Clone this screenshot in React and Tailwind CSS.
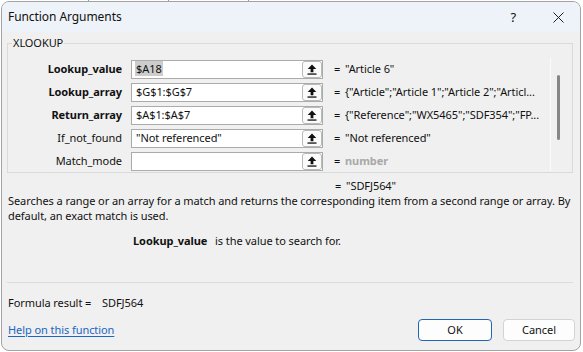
const rows = [
  { label: 'Lookup_value', bold: true, value: '$A18', selected: true, result: '"Article 6"' },
  { label: 'Lookup_array', bold: true, value: '$G$1:$G$7', result: '{"Article";"Article 1";"Article 2";"Articl...' },
  { label: 'Return_array', bold: true, value: '$A$1:$A$7', result: '{"Reference";"WX5465";"SDF354";"FP...' },
  { label: 'If_not_found', value: '"Not referenced"', result: '"Not referenced"' },
  { label: 'Match_mode', value: '', result: 'number', muted: true },
];

function RefIcon() {
  return (
    <svg width="10" height="11" viewBox="0 0 10 11">
      <path d="M5 0.5 L9.3 5 H6.4 V8.3 H3.6 V5 H0.7 Z" fill="#111" />
      <rect x="0.5" y="9.4" width="9" height="1.3" fill="#111" />
    </svg>
  );
}

export default function App() {
  return (
    <div className="relative w-[583px] h-[352px] bg-white overflow-hidden font-['Noto_Sans',sans-serif] text-[11px] tracking-[-0.07px] text-[#111]">
      {/* spreadsheet grid lines behind the dialog */}
      <div className="absolute left-[88px] top-0 w-px h-[2px] bg-[#9a9a9a]" />
      <div className="absolute left-[168px] top-0 w-px h-[2px] bg-[#9a9a9a]" />
      <div className="absolute left-[248px] top-0 w-px h-[2px] bg-[#9a9a9a]" />

      <div className="relative ml-[1px] mt-[1px] w-[580px] h-[350px] rounded-[8px] border border-[#a3a3a3] overflow-hidden bg-[#f0f0f0] flex flex-col">
        {/* title bar */}
        <div className="h-[30px] bg-[#eef3f9] flex items-center pl-[6px] pr-[14px] shrink-0">
          <span className="text-[12px] leading-none">Function Arguments</span>
          <span className="ml-auto text-[13px] leading-none mr-[37px]">?</span>
          <svg width="11" height="11" viewBox="0 0 11 11" className="mr-[2px]">
            <path d="M0.5 0.5 L10.5 10.5 M10.5 0.5 L0.5 10.5" stroke="#222" strokeWidth="1" />
          </svg>
        </div>

        {/* body */}
        <div className="pl-[5px] pt-[3px] flex flex-col">
          <fieldset className="w-[566px] border border-[#dadada] pl-0 pr-0 pt-[7px] pb-[1px] flex">
            <legend className="ml-[4px] px-[1px] text-[11px] leading-[16px]">XLOOKUP</legend>
            <div className="flex">
              <div className="w-[542px] pt-[2px] flex flex-col gap-[4px]">
                {rows.map((r) => (
                  <div key={r.label} className="flex items-center h-[19px]">
                    <div className={`w-[114px] text-right whitespace-nowrap ${r.bold ? 'font-bold' : ''}`}>{r.label}</div>
                    <div className="ml-[9px] w-[192px] h-[19px] bg-white border border-[#ababab] flex items-center">
                      <div className="flex-1 pl-[3px] whitespace-nowrap overflow-hidden">
                        {r.selected ? (
                          <span className="bg-[#cdcdcd] px-[1px]">{r.value}</span>
                        ) : (
                          <span className="px-[1px]">{r.value}</span>
                        )}
                      </div>
                      <div className="w-[20px] h-[17px] rounded-[3px] border border-[#b9b9b9] bg-[#fbfbfb] flex items-center justify-center">
                        <RefIcon />
                      </div>
                    </div>
                    <div className="w-[11px] ml-[11px] whitespace-nowrap">=</div>
                    <div className={`whitespace-nowrap ${r.muted ? 'text-[#a8a8a8] font-bold' : ''}`}>{r.result}</div>
                  </div>
                ))}
              </div>
              <div className="w-[22px] border-l border-[#fbfbfb] pl-[6px] pt-[17px]">
                <div className="w-[3px] h-[65px] rounded-full bg-[#868686]" />
              </div>
            </div>
          </fieldset>

          <div className="mt-[5px] flex leading-[15px]">
            <div className="w-[328px]" />
            <div className="w-[11px] whitespace-nowrap">=</div>
            <div className="whitespace-nowrap">"SDFJ564"</div>
          </div>
          <div className="pl-[1px] leading-[15px] whitespace-nowrap">
            Searches a range or an array for a match and returns the corresponding item from a second range or array. By
            <br />
            default, an exact match is used.
          </div>
          <div className="mt-[10px] leading-[15px] flex whitespace-nowrap">
            <span className="ml-[126px] w-[82px] font-bold">Lookup_value</span>
            <span>is the value to search for.</span>
          </div>

          <div className="mt-[34px] w-[566px] h-px bg-[#dcdcdc]" />

          <div className="mt-[12px] leading-[15px] flex whitespace-nowrap pl-[1px]">
            <span className="w-[94px]">Formula result =</span>
            <span>SDFJ564</span>
          </div>

          <div className="mt-[9px] flex items-center pr-[5px]">
            <span className="pl-[1px] text-[#1a66c2] underline underline-offset-2 whitespace-nowrap">Help on this function</span>
            <div className="ml-auto flex gap-[11px]">
              <button className="w-[74px] h-[22px] rounded-[4px] border border-[#1f66b6] bg-[#fdfdfd] text-[11px]">OK</button>
              <button className="w-[72px] h-[22px] rounded-[4px] border border-[#d3d3d3] bg-[#fdfdfd] text-[11px]">Cancel</button>
            </div>
          </div>
        </div>
      </div>
    </div>
  );
}
